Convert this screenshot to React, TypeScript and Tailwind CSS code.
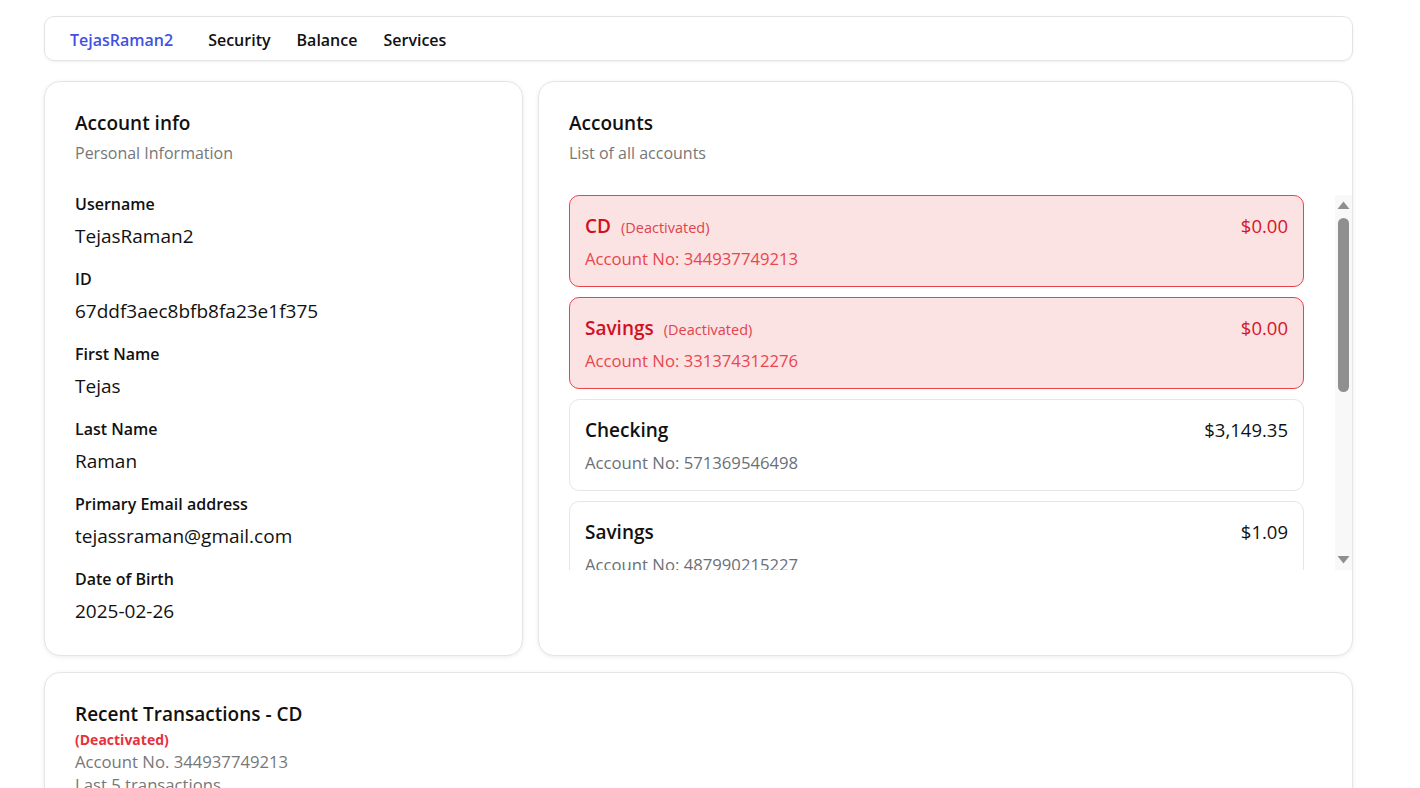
import React from "react";

type Account = {
  type: string;
  number: string;
  balance: string;
  deactivated: boolean;
};

const accounts: Account[] = [
  { type: "CD", number: "344937749213", balance: "$0.00", deactivated: true },
  { type: "Savings", number: "331374312276", balance: "$0.00", deactivated: true },
  { type: "Checking", number: "571369546498", balance: "$3,149.35", deactivated: false },
  { type: "Savings", number: "487990215227", balance: "$1.09", deactivated: false },
  { type: "Checking", number: "209318847201", balance: "$250.00", deactivated: false },
];

const info = [
  { label: "Username", value: "TejasRaman2" },
  { label: "ID", value: "67ddf3aec8bfb8fa23e1f375" },
  { label: "First Name", value: "Tejas" },
  { label: "Last Name", value: "Raman" },
  { label: "Primary Email address", value: "tejassraman@gmail.com" },
  { label: "Date of Birth", value: "2025-02-26" },
];

const Card = ({ className = "", children }: { className?: string; children: React.ReactNode }) => (
  <section
    className={`bg-white border border-[#e5e5e5] rounded-[16px] shadow-[0_1px_4px_rgba(0,0,0,0.08)] ${className}`}
  >
    {children}
  </section>
);

const AccountRow = ({ a }: { a: Account }) => {
  const red = a.deactivated;
  return (
    <div
      className={`shrink-0 rounded-[10px] border px-[15px] pt-[16px] pb-[15px] ${
        red ? "bg-[#fbe2e3] border-[#ec4348]" : "bg-white border-[#e6e6e6]"
      }`}
    >
      <div className="flex items-center justify-between">
        <div className="flex items-baseline">
          <span className={`text-[19px] leading-[28px] font-semibold ${red ? "text-[#d0101f]" : "text-[#111]"}`}>
            {a.type}
          </span>
          {red && <span className="ml-[10px] text-[14.5px] font-medium text-[#e0434c]">(Deactivated)</span>}
        </div>
        <span className={`text-[18.5px] leading-[28px] ${red ? "text-[#d8141f]" : "text-[#111]"}`}>{a.balance}</span>
      </div>
      <div className={`mt-[7px] text-[16.7px] leading-[24px] ${red ? "text-[#e8474d]" : "text-[#6b7078]"}`}>
        Account No: {a.number}
      </div>
    </div>
  );
};

// the list's own scrollbar is hidden by the headless browser, so draw one
const ScrollBar = () => (
  <div className="w-[17px] shrink-0 bg-[#f8f8f8] flex flex-col items-center pt-[6px] pb-[6px]">
    <svg width="13" height="8" viewBox="0 0 13 8">
      <polygon points="6.5,0.5 12.5,8 0.5,8" fill="#8f8f8f" />
    </svg>
    <div className="mt-[9px] w-[11px] h-[174px] rounded-full bg-[#8f8f8f]" />
    <div className="flex-1" />
    <svg width="13" height="8" viewBox="0 0 13 8">
      <polygon points="0.5,0 12.5,0 6.5,7.5" fill="#8f8f8f" />
    </svg>
  </div>
);

export default function App() {
  return (
    <div
      className="h-screen overflow-y-auto [scrollbar-width:none] bg-white text-[#111]"
      style={{ fontFamily: '"Open Sans", "Noto Sans", sans-serif' }}
    >
      <div className="ml-[44px] w-[1309px] pt-[16px] pb-10">
        {/* Nav */}
        <nav className="h-[45px] flex items-center px-[25px] pt-[3px] border border-[#e3e3e3] rounded-[10px] shadow-[0_1px_3px_rgba(0,0,0,0.06)] text-[16px] font-semibold">
          <span className="text-[#4152e3] mr-[35px]">TejasRaman2</span>
          <span className="mr-[26px]">Security</span>
          <span className="mr-[26px]">Balance</span>
          <span>Services</span>
        </nav>

        <div className="mt-[20px] grid grid-cols-[479px_1fr] gap-[15px] h-[575px]">
          {/* Account info */}
          <Card className="pl-[30px] pr-[30px] pt-[27px]">
            <h2 className="text-[19px] leading-[28px] font-semibold">Account info</h2>
            <p className="mt-[4px] text-[16px] leading-[24px] text-[#777]">Personal Information</p>
            <div className="mt-[27px] flex flex-col gap-[17px]">
              {info.map((f) => (
                <div key={f.label}>
                  <div className="text-[16px] leading-[24px] font-semibold">{f.label}</div>
                  <div className="mt-[6px] text-[19px] leading-[28px]">{f.value}</div>
                </div>
              ))}
            </div>
          </Card>

          {/* Accounts */}
          <Card className="pl-[30px] pt-[27px] pr-0">
            <h2 className="text-[19px] leading-[28px] font-semibold">Accounts</h2>
            <p className="mt-[4px] text-[16px] leading-[24px] text-[#777]">List of all accounts</p>
            <div className="mt-[30px] h-[375px] flex">
              <div className="flex-1 overflow-y-auto [scrollbar-width:none] pr-[31px] flex flex-col gap-[10px]">
                {accounts.map((a, i) => (
                  <AccountRow key={i} a={a} />
                ))}
              </div>
              <ScrollBar />
            </div>
          </Card>
        </div>

        {/* Recent transactions */}
        <Card className="mt-[16px] pl-[30px] pt-[27px] pb-6">
          <h2 className="text-[19px] leading-[28px] font-semibold">Recent Transactions - CD</h2>
          <div className="mt-[2px] text-[14px] leading-[20px] font-bold text-[#e5323e]">(Deactivated)</div>
          <div className="text-[16.7px] leading-[24px] text-[#777]">Account No. 344937749213</div>
          <div className="text-[16.7px] leading-[22px] text-[#777]">Last 5 transactions</div>
          <div className="mt-6 h-[200px]" />
        </Card>
      </div>
    </div>
  );
}
